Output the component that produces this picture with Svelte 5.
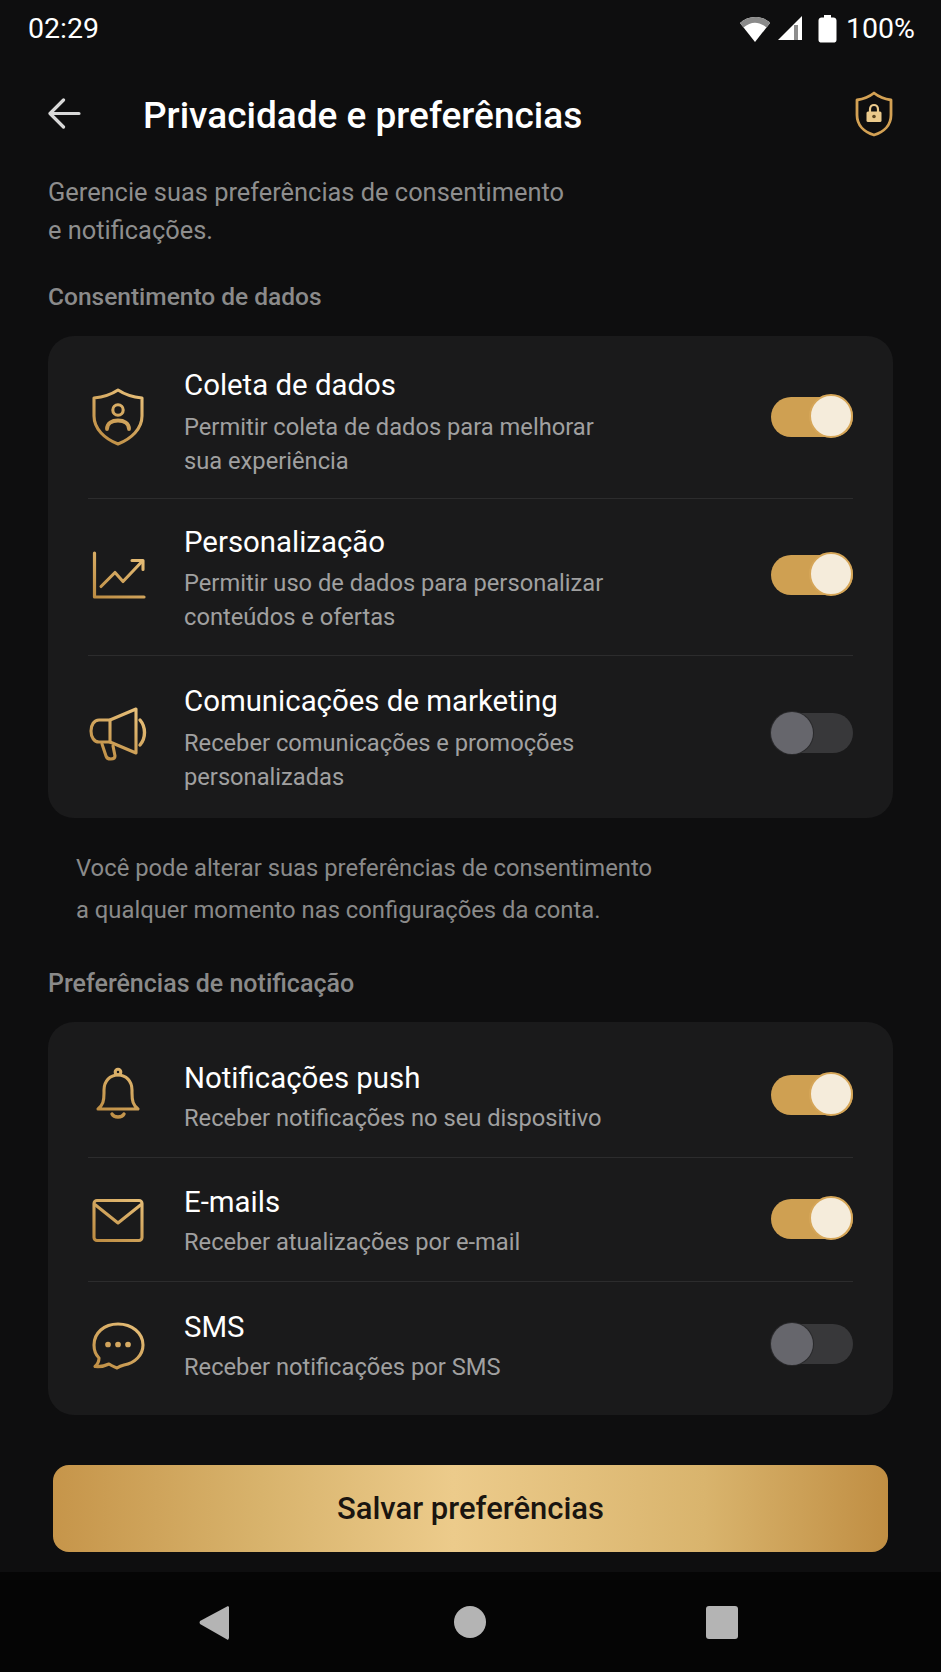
<script>
  const consent = [
    { icon: 'shield', title: 'Coleta de dados', lines: ['Permitir coleta de dados para melhorar', 'sua experiência'], on: true },
    { icon: 'chart', title: 'Personalização', lines: ['Permitir uso de dados para personalizar', 'conteúdos e ofertas'], on: true },
    { icon: 'mega', title: 'Comunicações de marketing', lines: ['Receber comunicações e promoções', 'personalizadas'], on: false }
  ];
  const notif = [
    { icon: 'bell', title: 'Notificações push', lines: ['Receber notificações no seu dispositivo'], on: true },
    { icon: 'mail', title: 'E-mails', lines: ['Receber atualizações por e-mail'], on: true },
    { icon: 'chat', title: 'SMS', lines: ['Receber notificações por SMS'], on: false }
  ];
</script>

{#snippet glyph(name)}
  <svg class="glyph" viewBox="0 0 64 64" fill="none" stroke="url(#gold)" stroke-width="3.100" stroke-linecap="round" stroke-linejoin="round">
    {#if name === 'shield'}
      <path d="M32 5 C38 9 46 12 56 13 V31 C56 44 45 54 32 59 C19 54 8 44 8 31 V13 C18 12 26 9 32 5 Z" />
      <circle cx="32" cy="25" r="5.200" />
      <path d="M21 44 C21 38 26 35.500 32 35.500 C38 35.500 43 38 43 44" stroke-width="3.800" />
    {:else if name === 'chart'}
      <path d="M8.500 8 V52 H58" stroke-width="3.200" />
      <path d="M15 41.500 L29 27.500 L37 36.500 L56 16.500" />
      <path d="M46 15.500 H57 V24.500" />
    {:else if name === 'mega'}
      <path d="M24 15 H13 C8 15 5 20 5 26 C5 32 8 37 13 37 H24 L50 48 V4 Z" />
      <path d="M24 15 V37" />
      <path d="M16 39 L20 51 C21 55 29 55 29 51 L27 41" />
      <path d="M54 15 C60 22 60 33 54 40" stroke-width="3.400" />
    {:else if name === 'bell'}
      <circle cx="32" cy="15" r="2.800" />
      <path d="M12 52 C17 48 18 44 18 36 V33 C18 24 24 18 32 18 C40 18 46 24 46 33 V36 C46 44 47 48 52 52 Z" />
      <path d="M26 57 C28 61 36 61 38 57" stroke-width="3.400" />
    {:else if name === 'mail'}
      <rect x="8" y="13.500" width="48" height="40" rx="3" />
      <path d="M9.500 18 L32 36 L54.500 18" />
    {:else if name === 'chat'}
      <path d="M32 8 C18 8 8 17 8 29 C8 35 10 39 13 42 C13 45 12 48 9 50.500 C14 51 19 50 23 48 C26 50 29 51 31 52 C34 50 36 49.500 38 49 C49 47 57 39 57 29 C57 17 46 8 32 8 Z" />
      <circle cx="22" cy="28.500" r="1.300" fill="url(#gold)" />
      <circle cx="32" cy="28.500" r="1.300" fill="url(#gold)" />
      <circle cx="42" cy="28.500" r="1.300" fill="url(#gold)" />
    {/if}
  </svg>
{/snippet}

{#snippet row(item)}
  <div class="row">
    <div class="icon">{@render glyph(item.icon)}</div>
    <div class="text">
      <div class="title">{item.title}</div>
      {#each item.lines as l}<div class="sub">{l}</div>{/each}
    </div>
    <div class="toggle" class:on={item.on}><span class="knob"></span></div>
  </div>
{/snippet}

<svg class="defs" width="0" height="0" aria-hidden="true">
  <defs>
    <linearGradient id="gold" gradientUnits="userSpaceOnUse" x1="50" y1="4" x2="14" y2="60">
      <stop offset="0" stop-color="#e8c07a" />
      <stop offset="1" stop-color="#bb8a40" />
    </linearGradient>
  </defs>
</svg>

<div class="screen">
  <div class="status">
    <span>02:29</span>
    <div class="status-right">
      <svg class="wifi" width="32" height="27" viewBox="0 0 32 27"><path d="M1 8 C9 0 23 0 31 8 L16 27 Z" fill="#fff" /><path d="M1 8 C9 0 23 0 31 8 L27.500 12.500 C20 6 12 6 4.500 12.500 Z" fill="#8a8a8a" /></svg>
      <svg class="sig" width="26" height="26" viewBox="0 0 26 26"><path d="M25 1 V25 H1 Z" fill="#fff" /><path d="M17 10 H21 V25 H17 Z" fill="#8d8d8d" /></svg>
      <svg class="bat" width="19" height="29" viewBox="0 0 19 29"><path d="M6 1 H13 V3.500 H15.500 C17 3.500 18.500 4.500 18.500 6.500 V26 C18.500 28 17 28.500 15.500 28.500 H3.500 C2 28.500 .5 28 .5 26 V6.500 C.5 4.500 2 3.500 3.500 3.500 H6 Z" fill="#fff" /></svg>
      <span class="pct">100%</span>
    </div>
  </div>

  <header>
    <svg class="back" width="33" height="31" viewBox="0 0 33 31" fill="none" stroke="#d8d8d8" stroke-width="3.200" stroke-linecap="round" stroke-linejoin="round"><path d="M15.500 2 L2 15.500 L15.500 29 M3 15.500 H31" /></svg>
    <h1>Privacidade e preferências</h1>
    <svg class="lock" width="40" height="46" viewBox="0 0 40 46" fill="none">
      <path d="M20 2 C25 6 30 8 37 9 V24 C37 34 30 41 20 44 C10 41 3 34 3 24 V9 C10 8 15 6 20 2 Z" stroke="#d3a154" stroke-width="2.800" stroke-linejoin="round" />
      <path d="M16 21 V18.500 C16 12.500 24 12.500 24 18.500 V21" stroke="#ebca8c" stroke-width="2.200" />
      <rect x="12.500" y="20.500" width="15" height="10.500" rx="1.500" fill="#ebca8c" />
      <circle cx="20" cy="25.500" r="1.800" fill="#5a4520" />
    </svg>
  </header>

  <p class="intro">Gerencie suas preferências de consentimento<br />e notificações.</p>

  <h2>Consentimento de dados</h2>
  <section class="card tall">
    {#each consent as item}{@render row(item)}{/each}
  </section>

  <p class="note">Você pode alterar suas preferências de consentimento<br />a qualquer momento nas configurações da conta.</p>

  <h2 class="second">Preferências de notificação</h2>
  <section class="card short">
    {#each notif as item}{@render row(item)}{/each}
  </section>

  <div class="action"><button>Salvar preferências</button></div>

  <nav>
    <svg class="tri" width="30" height="35" viewBox="0 0 30 35"><path d="M29 1 L30 2 V33 L29 35 L1 19 Q 0 17.500 1 16 Z" fill="#b4b4b4" /></svg>
    <span class="dot"></span>
    <span class="square"></span>
  </nav>
</div>

<style>
  :global(body) { margin: 0; background: #0e0e0f; }
  .defs { position: absolute; }
  .screen {
    width: 941px; height: 1672px; display: flex; flex-direction: column;
    background: #0e0e0f; color: #fff; overflow: hidden;
    font-family: Roboto, "Noto Sans", sans-serif;
  }
  .status {
    height: 56px; padding: 0 26px 0 28px; box-sizing: border-box;
    display: flex; align-items: center; justify-content: space-between;
    font-size: 28.500px; color: #fff;
  }
  .status-right { display: flex; align-items: center; }
  .sig { margin-left: 6px; }
  .bat { margin-left: 15px; }
  .pct { margin-left: 9px; }
  header {
    height: 58px; margin-top: 30px; padding: 0 48px; display: flex; align-items: center;
  }
  .back { flex: none; margin: 0 62px 3px 0; }
  h1 { margin: 0; flex: 1; font-size: 37px; font-weight: 500; color: #fff; }
  .lock { flex: none; margin: 0 -1px 3px 0; }
  .intro {
    margin: 29px 0 0; padding: 0 48px; font-size: 25.400px; line-height: 38px; color: #8e8e8e;
  }
  h2 {
    margin: 32px 0 0; padding: 0 48px; font-size: 24.500px; font-weight: 500; line-height: 32px; color: #8a8a8a;
  }
  h2.second { margin-top: 37px; font-size: 25px; }
  .card {
    margin: 23px 48px 0; padding: 0 40px; background: #1a1a1b; border-radius: 26px;
    display: flex; flex-direction: column;
  }
  .card.short { margin-top: 22px; }
  .row {
    display: flex; align-items: center; border-top: 1px solid #2c2c2d;
  }
  .row:first-child { border-top: 0; }
  .icon { width: 97px; flex: none; display: flex; margin-left: -1px; }
  .glyph { width: 64px; height: 64px; display: block; margin-left: -1px; }
  .text { flex: 1; padding: 25px 0 21px; }
  .tall .row:nth-child(1) .text { padding: 31px 0 20px; }
  .tall .row:nth-child(2) .toggle { margin-top: -4px; }
  .tall .row:nth-child(3) .text { padding: 27px 0 24px; }
  .tall .row:nth-child(3) .toggle { margin-top: -8px; }
  .short .title { margin-bottom: 5px; }
  .short .row:nth-child(1) .text { padding: 38px 0 22px; }
  .short .row:nth-child(2) .text { padding: 26px 0 22px; }
  .short .row:nth-child(3) .text { padding: 27px 0 31px; }
  .short .row:nth-child(1) .toggle { margin-top: 12px; }
  .short .row:nth-child(3) .toggle { margin-top: -8px; }
  .title { font-size: 29.400px; line-height: 36px; margin-bottom: 6.600px; color: #fff; }
  .sub { font-size: 23.700px; line-height: 34px; color: #a0a0a0; }
  .toggle {
    width: 82px; height: 40px; border-radius: 20px; background: #38383a;
    position: relative; flex: none;
  }
  .knob {
    position: absolute; top: -1px; left: 0; width: 42px; height: 42px; border-radius: 50%;
    background: #66666c; box-shadow: 0 0 0 1px #2a2a2c;
  }
  .toggle.on { background: #cfa052; }
  .toggle.on .knob {
    top: -3px; left: auto; right: 0; width: 40px; height: 40px;
    background: #f5ecdb; border: 2.500px solid #d6a658; box-shadow: none;
  }
  .note {
    margin: 29px 0 0; padding: 0 76px; font-size: 23.800px; line-height: 42px; color: #8a8a8a;
  }
  .action { padding: 28px 53px 20px; margin-top: auto; }
  button {
    display: block; width: 100%; height: 87px; border: 0; border-radius: 16px;
    background: linear-gradient(90deg, #c6954a 0%, #d8b36c 25%, #eccb8b 48%, #d9b46d 78%, #c08e43 100%);
    color: #1a1510; font: 500 31px Roboto, sans-serif;
  }
  nav {
    flex: none; height: 100px; background: #050505; box-sizing: border-box; padding-right: 4px;
    display: flex; align-items: center; justify-content: center;
  }
  .dot { width: 32px; height: 32px; border-radius: 50%; background: #b4b4b4; margin-left: 225px; }
  .square { width: 32px; height: 33px; border-radius: 3px; background: #b4b4b4; margin-left: 220px; }
</style>
